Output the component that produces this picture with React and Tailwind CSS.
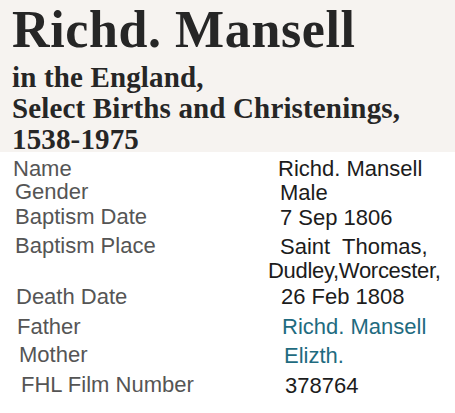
import React from "react";

function Row({ h, lx, vx, label, children, link }) {
  return (
    <div className={`flex ${h}`}>
      <div className={`${lx} w-[278px] shrink-0 text-[#555555]`}>{label}</div>
      <div className={`${vx} ${link ? "text-[#1f6b80]" : "text-[#1c1c1c]"} whitespace-nowrap`}>{children}</div>
    </div>
  );
}

export default function App() {
  return (
    <div className="w-[455px] h-[413px] overflow-hidden bg-white">
      <div className="bg-[#f6f3f0] h-[152px] pl-[12px] text-[#262626]">
        <div className="font-[family-name:'Liberation_Serif'] font-bold text-[52px] leading-[56px] pt-[2px] tracking-[0.6px]">
          Richd. Mansell
        </div>
        <div className="font-[family-name:'Liberation_Serif'] font-bold text-[29px] leading-[31px] mt-[4px] tracking-[0.15px]">
          <div>in the England,</div>
          <div>Select Births and Christenings,</div>
          <div>1538-1975</div>
        </div>
      </div>
      <div className="font-[family-name:'Liberation_Sans'] text-[22px] leading-[24px] pt-[5px] w-[440px] overflow-hidden">
        <Row h="h-[23px]" lx="pl-[13px]" vx="pl-[0px]" label="Name">Richd. Mansell</Row>
        <Row h="h-[25px]" lx="pl-[15px]" vx="pl-[2px] pt-[1px]" label="Gender">Male</Row>
        <Row h="h-[29px]" lx="pl-[15px]" vx="pl-[2px] pt-[1px]" label="Baptism Date">7 Sep 1806</Row>
        <div className="flex h-[51px]">
          <div className="pl-[15px] w-[278px] shrink-0 text-[#555555]">Baptism Place</div>
          <div className="text-[#1c1c1c] whitespace-nowrap pt-[1px]">
            <div className="pl-[2px]">Saint&nbsp; Thomas,</div>
            <div className="ml-[-10px] tracking-[-0.3px]">Dudley,Worcester,</div>
          </div>
        </div>
        <Row h="h-[30px]" lx="pl-[16px]" vx="pl-[3px]" label="Death Date">26 Feb 1808</Row>
        <Row h="h-[28px]" lx="pl-[17px]" vx="pl-[4px]" label="Father" link>Richd. Mansell</Row>
        <Row h="h-[30px]" lx="pl-[19px]" vx="pl-[6px] pt-[1px]" label="Mother" link>Elizth.</Row>
        <Row h="h-[30px]" lx="pl-[21px]" vx="pl-[7px] pt-[1px]" label="FHL Film Number">378764</Row>
      </div>
    </div>
  );
}
